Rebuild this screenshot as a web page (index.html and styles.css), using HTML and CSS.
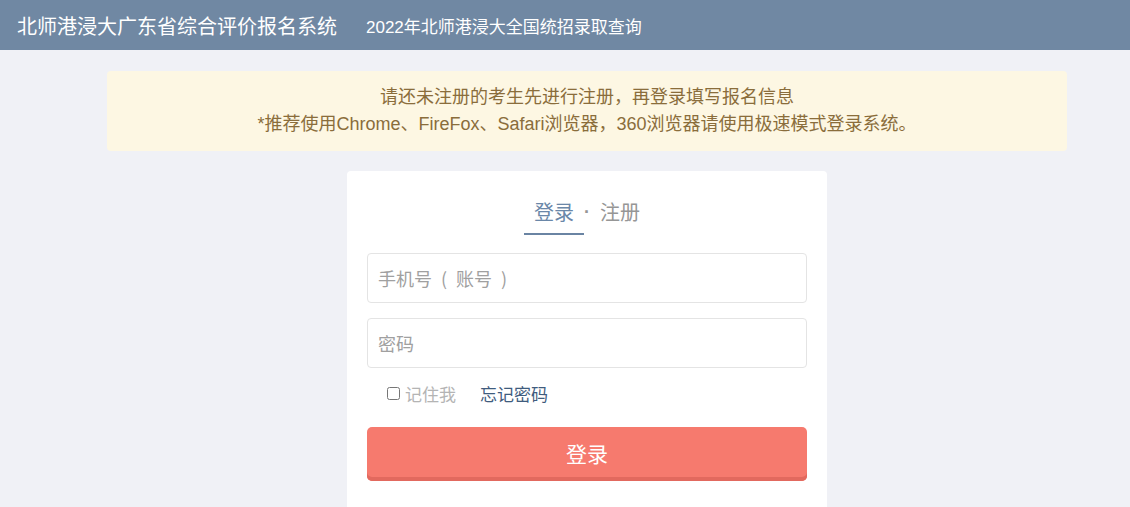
FILE: index.html
```html
<!DOCTYPE html>
<html lang="zh-CN">
<head>
    <meta charset="UTF-8">
    <meta name="viewport" content="width=device-width, initial-scale=1.0">
    <title>北师港浸大广东省综合评价报名系统</title>
    <link rel="stylesheet" href="styles.css">
</head>
<body>
    <div class="topbar">
        <a class="brand" href="#">北师港浸大广东省综合评价报名系统</a>
        <a class="nav-link" href="#">2022年北师港浸大全国统招录取查询</a>
    </div>

    <div class="main">
        <div class="notice">
            <p>请还未注册的考生先进行注册，再登录填写报名信息</p>
            <p>*推荐使用Chrome、FireFox、Safari浏览器，360浏览器请使用极速模式登录系统。</p>
        </div>

        <div class="login-box">
            <div class="tabs">
                <a class="tab active" href="#">登录</a>
                <b>·</b>
                <a class="tab" href="#">注册</a>
            </div>
            <form class="login-form">
                <input class="field" type="text" placeholder="手机号&#8194;(&#8194;账号&#8194;)">
                <input class="field" type="password" placeholder="密码">
                <div class="remember-row">
                    <label class="remember"><input type="checkbox"> 记住我</label>
                    <a class="forgot" href="#">忘记密码</a>
                </div>
                <button class="submit-btn" type="button">登录</button>
            </form>
        </div>
    </div>
</body>
</html>
```

FILE: styles.css
```css
body {
    margin: 0;
    background-color: #f0f1f6;
    font-family: "Noto Sans CJK SC", "Liberation Sans", sans-serif;
    overflow: hidden;
}

a {
    text-decoration: none;
}

.topbar {
    height: 50px;
    background-color: #7088a3;
    display: flex;
    align-items: center;
    padding-left: 17px;
}

.brand {
    color: #fff;
    font-size: 20px;
    margin-right: 29px;
}

.nav-link {
    color: #fff;
    font-size: 17px;
    font-family: "Liberation Sans", "Noto Sans CJK SC", sans-serif;
}

.main {
    width: 960px;
    margin: 21px 0 0 107px;
}

.notice {
    background-color: #fdf7e3;
    color: #8a6d3b;
    border-radius: 4px;
    text-align: center;
    padding: 13px 0;
    font-family: "Liberation Sans", "Noto Sans CJK SC", sans-serif;
    font-size: 18px;
    line-height: 27px;
}

.notice p {
    margin: 0;
}

.login-box {
    width: 480px;
    margin: 20px auto 0;
    background-color: #fff;
    border-radius: 4px;
    padding: 20px 20px 40px;
    box-sizing: border-box;
}

.tabs {
    display: flex;
    justify-content: center;
    align-items: flex-start;
    margin-bottom: 18px;
}

.tabs b {
    font-family: "Liberation Sans", sans-serif;
    font-weight: 700;
    color: #969696;
    font-size: 18px;
    line-height: 42px;
    width: 6px;
    text-align: center;
}

.tab {
    display: block;
    font-size: 20px;
    line-height: 22px;
    padding: 10px;
    color: #969696;
    border-bottom: 2px solid transparent;
}

.tab.active {
    color: #6a87a8;
    border-bottom-color: #6a84a3;
}

.login-form {
    display: flex;
    flex-direction: column;
}

.field {
    height: 50px;
    box-sizing: border-box;
    border: 1px solid #e4e4e4;
    border-radius: 4px;
    padding: 0 10px;
    font-family: "Noto Sans CJK SC", sans-serif;
    font-size: 18px;
    margin-bottom: 15px;
    outline: none;
}

.field::placeholder {
    color: #a0a0a0;
}

.remember-row {
    display: flex;
    align-items: center;
    padding-left: 20px;
    height: 22px;
    margin: -1px 0 23px;
    font-size: 17px;
}

.remember {
    display: flex;
    align-items: center;
    color: #b4b4b4;
    margin-right: 24px;
}

.remember input {
    width: 13px;
    height: 13px;
    margin: 0 5px 0 0;
}

.forgot {
    color: #3f5c7e;
}

.submit-btn {
    height: 54px;
    border: none;
    border-radius: 5px;
    background-color: #f67a6e;
    box-shadow: inset 0 -4px 0 #e2695e;
    color: #fff;
    font-family: "Noto Sans CJK SC", sans-serif;
    font-size: 21px;
    padding-bottom: 4px;
}
```
